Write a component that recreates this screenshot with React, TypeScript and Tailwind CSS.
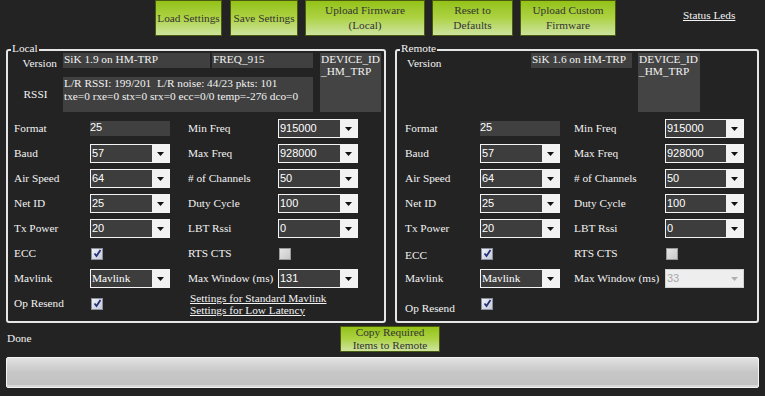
const serif = { fontFamily: '"Liberation Serif", "Times New Roman", serif' };

function GreenButton({ lines, className }: { lines: string[]; className: string }) {
  return (
    <div
      className={
        "flex flex-col items-center justify-center border border-[#4a5a10] bg-gradient-to-b from-[#93c214] via-[#aed242] to-[#cde49c] text-[11.3px] leading-[15px] text-[#333] whitespace-nowrap " +
        className
      }
    >
      {lines.map((l) => (
        <span key={l}>{l}</span>
      ))}
    </div>
  );
}

function Combo({ value, w = "w-[80px]", disabled = false }: { value: string; w?: string; disabled?: boolean }) {
  const numeric = /^\d+$/.test(value);
  if (disabled) {
    return (
      <div className={"flex h-[19px] border border-[#d0d0d0] bg-[#eeeeee] " + w}>
        <div className="flex-1 pl-[1px] font-['Liberation_Sans',sans-serif] text-[11px] leading-[17px] text-[#a8a8a8]">{value}</div>
        <div className="flex w-[17px] items-center justify-center">
          <svg width="7" height="4" viewBox="0 0 7 4">
            <polygon points="0,0 7,0 3.5,4" fill="#b0b0b0" />
          </svg>
        </div>
      </div>
    );
  }
  return (
    <div className={"flex h-[19px] border border-[#f4f4f4] " + w}>
      <div
        className={
          "flex-1 bg-[#3d3d3d] pl-[1px] leading-[17px] text-white " +
          (numeric ? "font-['Liberation_Sans',sans-serif] text-[11px]" : "text-[11.3px]")
        }
      >
        {value}
      </div>
      <div className="flex w-[17px] items-center justify-center bg-[#f2f2f2]">
        <svg width="7" height="4" viewBox="0 0 7 4">
          <polygon points="0,0 7,0 3.5,4" fill="#111" />
        </svg>
      </div>
    </div>
  );
}

function Check({ checked }: { checked: boolean }) {
  return (
    <div
      className={
        "flex h-[12px] w-[12px] items-center justify-center border " +
        (checked
          ? "border-[#8c909c] bg-gradient-to-br from-[#f0f2f7] to-[#c4cad8]"
          : "border-[#9a9a9a] bg-gradient-to-br from-[#e6e6e6] to-[#c8c8c8]")
      }
    >
      {checked && (
        <svg width="9" height="9" viewBox="0 0 9 9">
          <path d="M1.5 4.5 L3.5 7 L7.5 1" stroke="#26307a" strokeWidth="1.8" fill="none" />
        </svg>
      )}
    </div>
  );
}

function TextBox({ value, w = "w-[80px]" }: { value: string; w?: string }) {
  return (
    <div className={"h-[15px] bg-[#404040] font-['Liberation_Sans',sans-serif] text-[11px] leading-[12px] text-white " + w}>
      {value}
    </div>
  );
}

type Cell = { kind: "combo" | "text" | "check" | "links" | "none"; value?: string; checked?: boolean; disabled?: boolean };

type Row = { l: string; lc: Cell; r?: string; rc: Cell; lcls?: string };

function Control({ c, w }: { c: Cell; w: string }) {
  if (c.kind === "combo") return <Combo value={c.value!} w={w} disabled={c.disabled} />;
  if (c.kind === "text") return <TextBox value={c.value!} w={w} />;
  if (c.kind === "check") return <div className="pl-[1px]"><Check checked={!!c.checked} /></div>;
  return null;
}

function Fields({
  rows,
  cols,
}: {
  rows: Row[];
  cols: { pl: string; l1: string; c1: string; gap: string; l2: string; c2: string };
}) {
  return (
    <div className={"mt-[4px] flex flex-col " + cols.pl}>
      {rows.map((row) => (
        <div key={row.l} className="flex h-[25px] items-center">
          <div className={"text-[11.3px] whitespace-nowrap " + cols.l1 + " " + (row.lcls ?? "")}>{row.l}</div>
          <div className={cols.c1}>
            <Control c={row.lc} w={cols.c1} />
          </div>
          {row.rc.kind === "links" ? (
            <div className={"flex flex-col text-[11.3px] leading-[12px] underline " + cols.gap}>
              <span className="pl-[2px]">Settings for Standard Mavlink</span>
              <span className="pl-[2px]">Settings for Low Latency</span>
            </div>
          ) : (
            <>
              <div className={"text-[11.3px] whitespace-nowrap " + cols.gap + " " + cols.l2}>{row.r}</div>
              <div className={cols.c2}>
                <Control c={row.rc} w={cols.c2} />
              </div>
            </>
          )}
        </div>
      ))}
    </div>
  );
}

const localRows: Row[] = [
  { l: "Format", lc: { kind: "text", value: "25" }, r: "Min Freq", rc: { kind: "combo", value: "915000" } },
  { l: "Baud", lc: { kind: "combo", value: "57" }, r: "Max Freq", rc: { kind: "combo", value: "928000" } },
  { l: "Air Speed", lc: { kind: "combo", value: "64" }, r: "# of Channels", rc: { kind: "combo", value: "50" } },
  { l: "Net ID", lc: { kind: "combo", value: "25" }, r: "Duty Cycle", rc: { kind: "combo", value: "100" } },
  { l: "Tx Power", lc: { kind: "combo", value: "20" }, r: "LBT Rssi", rc: { kind: "combo", value: "0" } },
  { l: "ECC", lc: { kind: "check", checked: true }, r: "RTS CTS", rc: { kind: "check", checked: false } },
  { l: "Mavlink", lc: { kind: "combo", value: "Mavlink" }, r: "Max Window (ms)", rc: { kind: "combo", value: "131" } },
  { l: "Op Resend", lc: { kind: "check", checked: true }, rc: { kind: "links" } },
];

const remoteRows: Row[] = [
  { l: "Format", lc: { kind: "text", value: "25" }, r: "Min Freq", rc: { kind: "combo", value: "915000" } },
  { l: "Baud", lc: { kind: "combo", value: "57" }, r: "Max Freq", rc: { kind: "combo", value: "928000" } },
  { l: "Air Speed", lc: { kind: "combo", value: "64" }, r: "# of Channels", rc: { kind: "combo", value: "50" } },
  { l: "Net ID", lc: { kind: "combo", value: "25" }, r: "Duty Cycle", rc: { kind: "combo", value: "100" } },
  { l: "Tx Power", lc: { kind: "combo", value: "20" }, r: "LBT Rssi", rc: { kind: "combo", value: "0" } },
  { l: "ECC", lc: { kind: "check", checked: true }, r: "RTS CTS", rc: { kind: "check", checked: false }, lcls: "pt-[3px]" },
  { l: "Mavlink", lc: { kind: "combo", value: "Mavlink" }, r: "Max Window (ms)", rc: { kind: "combo", value: "33", disabled: true } },
  { l: "Op Resend", lc: { kind: "check", checked: true }, rc: { kind: "none" }, lcls: "pt-[10px]" },
];

function DeviceBox({ w }: { w: string }) {
  return (
    <div className={"h-[59px] bg-[#444] pl-[1px] text-[11.3px] leading-[12px] whitespace-nowrap overflow-hidden " + w}>
      <div>DEVICE_ID</div>
      <div>_HM_TRP</div>
    </div>
  );
}

export default function App() {
  return (
    <div className="h-[396px] w-[765px] overflow-hidden bg-[#232323] text-[#f2f2f2]" style={serif}>
      {/* toolbar */}
      <div className="flex h-[36px] pl-[155px]">
        <GreenButton lines={["Load Settings"]} className="w-[67px]" />
        <GreenButton lines={["Save Settings"]} className="ml-[8px] w-[68px]" />
        <GreenButton lines={["Upload Firmware", "(Local)"]} className="ml-[7px] w-[120px]" />
        <GreenButton lines={["Reset to", "Defaults"]} className="ml-[7px] w-[81px]" />
        <GreenButton lines={["Upload Custom", "Firmware"]} className="ml-[7px] w-[96px]" />
        <div className="ml-[67px] pt-[7px] text-[11.3px] underline">Status Leds</div>
      </div>

      {/* group boxes */}
      <div className="mt-[13px] flex">
        <div className="relative ml-[6px] h-[274px] w-[380px] rounded-[3px] border-2 border-[#e6e6e6]">
          <span className="absolute -top-[10px] left-[3px] bg-[#232323] px-[1px] text-[11.3px] leading-[14px]">Local</span>
          <div className="mt-[2px] flex">
            <div className="flex w-[55px] flex-col text-[11.3px]">
              <div className="h-[24px] pr-[6px] pt-[3px] text-right leading-[15px]">Version</div>
              <div className="flex h-[35px] items-center justify-center">RSSI</div>
            </div>
            <div className="w-[250px]">
              <div className="flex h-[15px] text-[11.3px] leading-[13px]">
                <div className="w-[147px] bg-[#404040] pl-[1px]">SiK 1.9 on HM-TRP</div>
                <div className="ml-[2px] w-[101px] bg-[#404040] pl-[1px]">FREQ_915</div>
              </div>
              <div className="mt-[9px] h-[35px] bg-[#404040] pl-[1px] text-[11.3px] leading-[13px] whitespace-nowrap">
                <div>L/R RSSI: 199/201&nbsp; L/R noise: 44/23 pkts: 101</div>
                <div>txe=0 rxe=0 stx=0 srx=0 ecc=0/0 temp=-276 dco=0</div>
              </div>
            </div>
            <div className="ml-[7px]">
              <DeviceBox w="w-[61px]" />
            </div>
          </div>
          <Fields
            rows={localRows}
            cols={{ pl: "pl-[6px]", l1: "w-[76px]", c1: "w-[80px]", gap: "ml-[18px]", l2: "w-[90px]", c2: "w-[80px]" }}
          />
        </div>

        <div className="relative ml-[9px] h-[274px] w-[364px] rounded-[3px] border-2 border-[#e6e6e6]">
          <span className="absolute -top-[10px] left-[3px] bg-[#232323] px-[1px] text-[11.3px] leading-[14px]">Remote</span>
          <div className="mt-[2px] flex">
            <div className="h-[59px] w-[134px] pl-[10px] pt-[3px] text-[11.3px] leading-[15px]">Version</div>
            <div className="h-[15px] w-[101px] bg-[#404040] pl-[1px] text-[11.3px] leading-[13px]">SiK 1.6 on HM-TRP</div>
            <div className="ml-[6px]">
              <DeviceBox w="w-[62px]" />
            </div>
          </div>
          <Fields
            rows={remoteRows}
            cols={{ pl: "pl-[8px]", l1: "w-[75px]", c1: "w-[80px]", gap: "ml-[14px]", l2: "w-[91px]", c2: "w-[79px]" }}
          />
        </div>
      </div>

      {/* status row */}
      <div className="flex h-[29px]">
        <div className="w-[340px] pl-[7px] pt-[7px] text-[11.3px]">Done</div>
        <GreenButton lines={["Copy Required", "Items to Remote"]} className="mt-[3px] h-[26px] w-[100px] !leading-[13px]" />
      </div>

      {/* progress bar */}
      <div className="ml-[6px] mt-[5px] h-[31px] w-[753px] rounded-[2px] border border-[#f4f4f4] bg-gradient-to-b from-[#e2e2e2] via-[#c6c6c6] to-[#c2c2c2] shadow-[inset_0_-2px_0_#d8d8d8]" />
    </div>
  );
}
